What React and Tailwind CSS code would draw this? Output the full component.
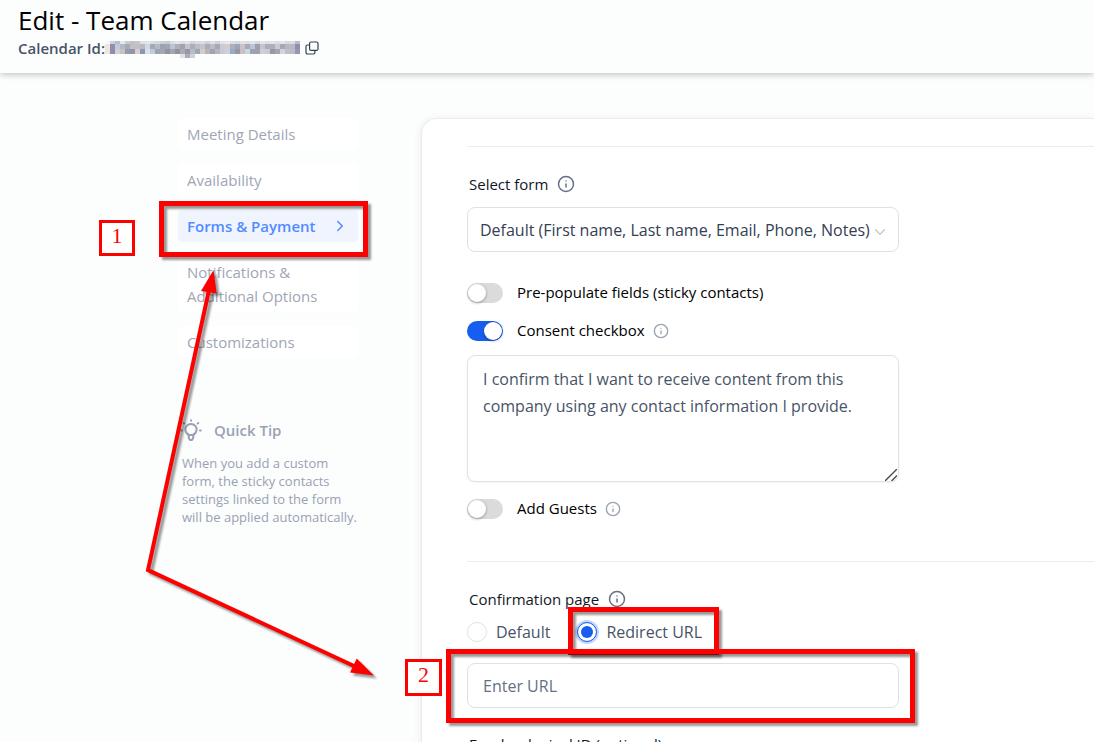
import { useState } from 'react';
import { ChevronDown, ChevronRight, Info } from 'lucide-react';

const navItems = [
  { id: 'meeting', label: 'Meeting Details' },
  { id: 'availability', label: 'Availability' },
  { id: 'forms', label: 'Forms & Payment' },
  { id: 'notifications', label: 'Notifications & Additional Options' },
  { id: 'customizations', label: 'Customizations' },
];

// shades of the redacted id, top row to bottom row
const redactedRows = [
  { y: 3, height: 3, fills: ['#f6f8fa', '#c8d2e0', '#b9bdc9', '#e4e8ef', '#c5cbd8', '#bcc1ce', '#c9c5cc', '#dde1e9', '#e6e3e5', '#d7e0ea', '#d5d8e0', '#cbd0da', '#c9cad4', '#dadde5', '#e1e5ec', '#d9dee7', '#e4e1e4', '#cfd5df', '#d5dae4', '#dfdce0', '#cdd3de', '#dde0e7', '#d4d3da', '#e0e3ea', '#e6e9ee', '#dcdde3', '#d4dae4', '#e5e2e5', '#dbdfe7', '#e3e6ec', '#d8dae2', '#e2e5eb', '#dde0e7', '#e6e4e7', '#dbdee6', '#e4e6ec', '#d4d9e2', '#dcdde4', '#b8bccb'] },
  { y: 6, height: 5, fills: ['#f1e4dc', '#8d92a8', '#c1cbd8', '#b3b8c4', '#a9a9b2', '#c9bcb9', '#b9c2d0', '#c0b8bb', '#cddae8', '#a6a9b5', '#b8babf', '#9ea2b0', '#a2a6b3', '#bcc4cf', '#b2aeb5', '#9ca3b2', '#c7c2c7', '#a8aebb', '#b8bfcb', '#c6c2c8', '#a9acb9', '#b9bdc9', '#aba7b0', '#c9cbd2', '#d7cbc6', '#a7b0c1', '#9fa4b4', '#c9c3c7', '#a6aab9', '#bec5d0', '#9b9fb0', '#c8c3c7', '#a5b0c2', '#b1b0ba', '#c9cbd3', '#a3a8b7', '#bbb7c0', '#b6b9c5', '#8b90ad'] },
  { y: 11, height: 5, fills: ['#f0e5de', '#8b90a6', '#cbd2dd', '#c8c0c1', '#929baf', '#8d97ac', '#d8cfce', '#8c96ae', '#d9e1eb', '#bfcada', '#9da3b6', '#a8a5b0', '#8f94a5', '#a3a6b3', '#8e92a2', '#b1a9ae', '#9298a8', '#b9bcc6', '#a2a6b4', '#d6ccc9', '#b6b4bd', '#a3a2ae', '#b7b5be', '#c8cbd4', '#c9d3df', '#9da9bf', '#9895a2', '#c8bfc2', '#cad6e3', '#9aa3b7', '#a59ea8', '#c7d1df', '#d1c9cb', '#9099b0', '#a9a3ac', '#cdd5df', '#c3bdc5', '#bcbac7', '#9297b3'] },
];

const InfoIcon = ({ light }) => (
  <Info className={light ? 'size-4 text-[#98a2b3]' : 'size-[18px] text-[#667085]'} />
);

const RedactedId = () => (
  <svg className="h-5 w-[195px]" viewBox="0 0 195 20" shapeRendering="crispEdges" aria-hidden="true">
    {redactedRows.map((row) =>
      row.fills.map((fill, x) => (
        <rect key={`${x}-${row.y}`} x={x * 5} y={row.y} width="5" height={row.height} fill={fill} />
      ))
    )}
    <rect x="75" y="16" width="5" height="4" fill="#e2e0e4" />
    <rect x="80" y="16" width="5" height="4" fill="#aeabb8" />
    <rect x="85" y="16" width="5" height="4" fill="#d0d2da" />
  </svg>
);

const BulbIcon = () => (
  <svg className="-ml-[3px] size-6" viewBox="0 0 24 24" fill="none" stroke="currentColor" strokeWidth="2" strokeLinecap="round" strokeLinejoin="round">
    <path d="M9.500 17v-.500a5.600 5.600 0 1 1 5 0v.500z" />
    <path d="M9.500 17l.5 3.500 1 1.500h2l1-1.500.5-3.500" />
    <path d="M12 2.200v.600M4.700 5l.6.500M19.300 5l-.6.500M2.200 12.500h.8M21 12.500h.8" />
  </svg>
);

const Switch = ({ id, label, checked, onChange, info }) => (
  <div className="flex h-6 items-center">
    <input
      id={id}
      type="checkbox"
      role="switch"
      checked={checked}
      onChange={(e) => onChange(e.target.checked)}
      className="h-5 w-9 shrink-0 appearance-none rounded-full bg-[#dbdbdb] before:m-px before:block before:size-[18px] before:rounded-full before:bg-white before:shadow-[0_1px_3px_rgba(0,0,0,0.35)] before:content-[''] checked:bg-[#155eef] checked:before:translate-x-4"
    />
    <label htmlFor={id} className="mr-2 ml-3.5 pb-0.5 text-[15px] text-black">{label}</label>
    {info && <InfoIcon light />}
  </div>
);

const Radio = ({ label, value, selected, onSelect }) => (
  <label className="flex items-center gap-[9px] text-base text-[#475467]">
    <input
      type="radio"
      name="confirmation"
      value={value}
      checked={selected === value}
      onChange={() => onSelect(value)}
      className="size-5 appearance-none rounded-full border border-[#e0e0e6] bg-white p-[3px] checked:border-[#155eef] checked:bg-[#155eef] checked:bg-clip-content checked:shadow-[0_0_0_2px_rgba(21,94,239,0.25)]"
    />
    {label}
  </label>
);

const Annotations = () => (
  <div className="pointer-events-none absolute inset-0" aria-hidden="true">
    <div className="absolute left-[159px] top-[201px] h-14 w-[209px] border-5 border-[#ff0000] drop-shadow-[3px_3px_1px_rgba(0,0,0,0.4)]" />
    <div className="absolute left-[568px] top-[607px] h-12 w-[151px] border-5 border-[#ff0000] drop-shadow-[3px_3px_1px_rgba(0,0,0,0.4)]" />
    <div className="absolute left-[446px] top-[649px] h-[74px] w-[469px] border-5 border-[#ff0000] drop-shadow-[3px_3px_1px_rgba(0,0,0,0.4)]" />
    <svg className="absolute left-0 top-0 drop-shadow-[3px_3px_1px_rgba(0,0,0,0.4)]" width="400" height="700" viewBox="0 0 400 700">
      <path d="M209 290 L148 570 L354 666" fill="none" stroke="#ff0000" strokeWidth="4" />
      <path d="M213.500 270 L201 291 L216.700 293.500 Z M374 675.500 L350 672.500 L356.700 658.500 Z" fill="#ff0000" />
    </svg>
    <div className="absolute left-[99px] top-[220px] flex size-9 items-center justify-center border-3 border-[#ff0000] bg-white pb-1.5 font-['Liberation_Serif',serif] text-[22px] text-[#ff0000]">1</div>
    <div className="absolute left-[405px] top-[659px] flex h-[37px] w-[37px] items-center justify-center border-3 border-[#ff0000] bg-white pb-1.5 font-['Liberation_Serif',serif] text-[22px] text-[#ff0000]">2</div>
  </div>
);

const App = () => {
  const [active, setActive] = useState('forms');
  const [prePopulate, setPrePopulate] = useState(false);
  const [consent, setConsent] = useState(true);
  const [addGuests, setAddGuests] = useState(false);
  const [confirmation, setConfirmation] = useState('redirect');

  return (
    <div className="relative flex h-screen flex-col overflow-hidden bg-[#fcfdfd] font-['Open_Sans',sans-serif]">
      <header className="h-[73px] shrink-0 bg-[#fcfdfd] px-[18px] pt-[5px] shadow-[0_2px_6px_rgba(0,0,0,0.22)]">
        <h1 className="mb-px text-[26px] leading-[30px] text-black">Edit - Team Calendar</h1>
        <div className="flex h-6 items-center text-[15px] font-semibold text-[#475467]">
          <span>Calendar Id:</span>
          <span className="mr-[5px]"><RedactedId /></span>
          <button type="button" aria-label="Copy calendar id">
            <svg className="size-3.5" viewBox="0 0 14 14" fill="none" stroke="#344054" strokeWidth="1.2">
              <rect x="4.600" y="1" width="8.400" height="8.400" rx="1.500" />
              <path d="M4.600 4H2.600A1.500 1.500 0 0 0 1 5.500v5.900A1.500 1.500 0 0 0 2.500 13h5.900a1.500 1.500 0 0 0 1.500-1.500V9.400" />
            </svg>
          </button>
        </div>
      </header>

      <div className="flex min-h-0 flex-1 pt-[45px]">
        <aside className="ml-[178px] w-[180px] shrink-0">
          <nav className="flex flex-col gap-3.5">
            {navItems.map((item) => (
              <button
                key={item.id}
                type="button"
                onClick={() => setActive(item.id)}
                className={`flex items-center justify-between rounded px-[9px] py-1 text-left text-[15px] leading-6 ${active === item.id ? 'bg-[#eff4ff] font-semibold text-[#528bff]' : 'bg-white text-[#a0a6b5]'}`}
              >
                {item.label}
                {active === item.id && <ChevronRight className="size-[18px] shrink-0" />}
              </button>
            ))}
          </nav>
          <div className="mt-[60px] pl-1 text-[#98a2b3]">
            <h2 className="flex items-center gap-[11px] text-[15px] leading-6 font-semibold">
              <BulbIcon />
              Quick Tip
            </h2>
            <p className="mt-3 text-[13px] leading-[18px] whitespace-nowrap">
              When you add a custom<br />
              form, the sticky contacts<br />
              settings linked to the form<br />
              will be applied automatically.
            </p>
          </div>
        </aside>

        <main className="ml-[63px] h-[800px] min-w-0 flex-1 rounded-tl-2xl border-t border-l border-[#eaecf0] bg-white pl-[45px] pt-[27px] shadow-[0_1px_8px_rgba(0,0,0,0.08)]">
          <section className="border-t border-[#eaecf0] pt-[25px]">
            <div className="flex h-6 items-center gap-[9px] pl-0.5">
              <label htmlFor="form" className="text-[15px] text-[#101828]">Select form</label>
              <InfoIcon />
            </div>
            <div className="relative mt-[11px] w-[432px] max-w-full">
              <select id="form" className="h-[45px] w-full appearance-none rounded-lg border border-[#e0e0e6] bg-white px-3 text-base text-[#344054]">
                <option>Default (First name, Last name, Email, Phone, Notes)</option>
              </select>
              <ChevronDown className="pointer-events-none absolute top-4 right-2.5 size-[18px] text-[#c2c2c2]" strokeWidth={1.5} />
            </div>
            <div className="mt-[29px] flex flex-col gap-3.5">
              <Switch id="prepopulate" label="Pre-populate fields (sticky contacts)" checked={prePopulate} onChange={setPrePopulate} />
              <Switch id="consent" label="Consent checkbox" checked={consent} onChange={setConsent} info />
            </div>
            <div className="relative mt-3 mb-[15px] w-[432px] max-w-full">
              <textarea
                aria-label="Consent text"
                defaultValue="I confirm that I want to receive content from this company using any contact information I provide."
                className="block h-[127px] w-full resize-none rounded-lg border border-[#e0e0e6] px-[15px] py-2.5 text-base leading-[27px] text-[#475467] shadow-xs"
              />
              <svg className="pointer-events-none absolute right-0.5 bottom-px size-3" viewBox="0 0 12 12" stroke="#4a4a4a" strokeWidth="1.4" aria-hidden="true">
                <path d="M0 12L12 0M6.500 12L12 6.500" />
              </svg>
            </div>
            <Switch id="guests" label="Add Guests" checked={addGuests} onChange={setAddGuests} info />
          </section>

          <section className="mt-10 border-t border-[#eaecf0] pt-[25px]">
            <div className="flex h-6 items-center gap-[9px] pl-0.5 text-[15px] text-[#101828]">
              Confirmation page
              <InfoIcon />
            </div>
            <div className="mt-[9px] flex h-6 items-center gap-[27px]">
              <Radio label="Default" value="default" selected={confirmation} onSelect={setConfirmation} />
              <Radio label="Redirect URL" value="redirect" selected={confirmation} onSelect={setConfirmation} />
            </div>
            <input
              type="text"
              aria-label="Redirect URL"
              placeholder="Enter URL"
              className="mt-[19px] block h-[45px] w-[432px] max-w-full rounded-lg border border-[#e0e0e6] px-[15px] text-base text-[#344054] placeholder:text-[#667085]"
            />
            <label htmlFor="pixel" className="mt-6 block pl-0.5 text-[15px] leading-6 text-[#101828]">Facebook pixel ID (optional)</label>
            <input id="pixel" type="text" className="mt-3 block h-[45px] w-[432px] max-w-full rounded-lg border border-[#e0e0e6] px-[15px]" />
          </section>
        </main>
      </div>

      <Annotations />
    </div>
  );
};

export default App;
